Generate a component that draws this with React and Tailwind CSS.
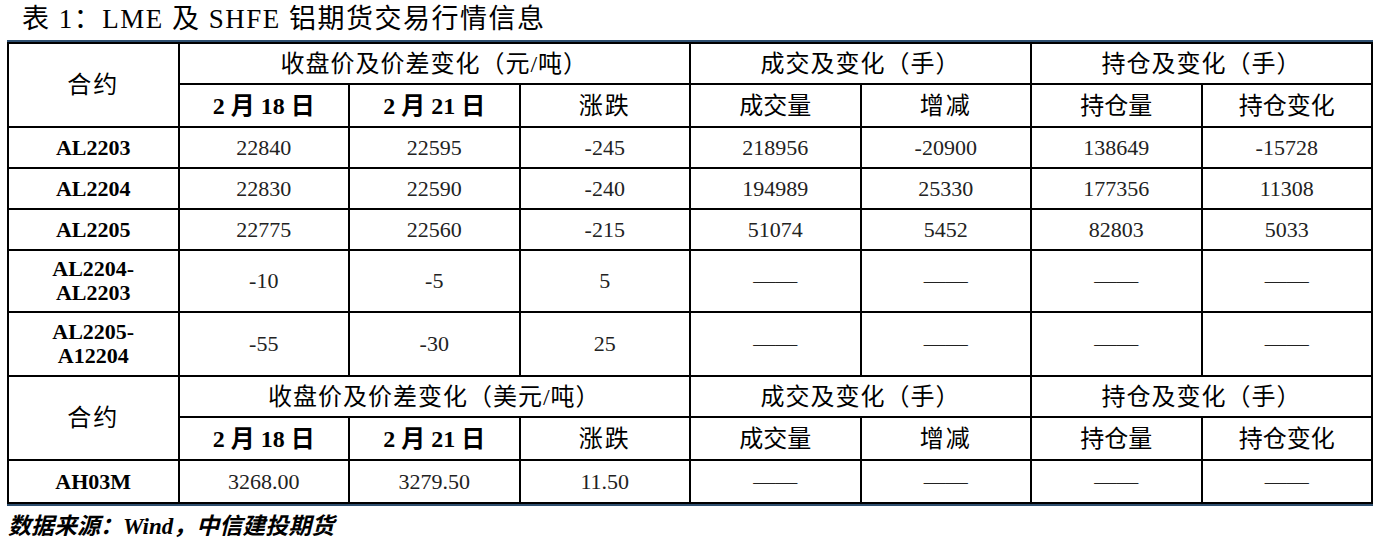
import React from "react";

const serif = { fontFamily: '"Liberation Serif", "Noto Sans CJK SC", serif' };

const cell = "border-2 border-black text-center align-middle p-0";
const hd = "text-[24px] leading-[28px] text-black";
const num = "text-[22px] leading-[24px] text-[#222]";

const dash = "——";

const rows = [
  ["AL2203", "22840", "22595", "-245", "218956", "-20900", "138649", "-15728"],
  ["AL2204", "22830", "22590", "-240", "194989", "25330", "177356", "11308"],
  ["AL2205", "22775", "22560", "-215", "51074", "5452", "82803", "5033"],
];

const spreads = [
  [["AL2204-", "AL2203"], "-10", "-5", "5"],
  [["AL2205-", "A12204"], "-55", "-30", "25"],
];

function HeaderRows({ unit }) {
  return (
    <>
      <tr className="h-[41px]">
        <td rowSpan={2} className={`${cell} ${hd} tracking-[2px]`}>合约</td>
        <td colSpan={3} className={`${cell} ${hd} tracking-[1px]`}>收盘价及价差变化（{unit}）</td>
        <td colSpan={2} className={`${cell} ${hd} tracking-[1px]`}>成交及变化（手）</td>
        <td colSpan={2} className={`${cell} ${hd} tracking-[1px]`}>持仓及变化（手）</td>
      </tr>
      <tr className="h-[43px]">
        <td className={`${cell} ${hd} font-bold`}>2 月 18 日</td>
        <td className={`${cell} ${hd} font-bold`}>2 月 21 日</td>
        <td className={`${cell} ${hd} tracking-[2px]`}>涨跌</td>
        <td className={`${cell} ${hd}`}>成交量</td>
        <td className={`${cell} ${hd} tracking-[2px]`}>增减</td>
        <td className={`${cell} ${hd}`}>持仓量</td>
        <td className={`${cell} ${hd}`}>持仓变化</td>
      </tr>
    </>
  );
}

export default function App() {
  return (
    <div className="w-[1382px] h-[543px] bg-white overflow-hidden" style={serif}>
      <div className="h-[40px] pl-[22px] pt-[2px] text-[27px] leading-[34px] text-black tracking-[1.5px]">
        表 1：LME 及 SHFE 铝期货交易行情信息
      </div>
      <div className="ml-[7px] w-[1366px] border-t-[3px] border-b-[3px] border-[#2e4f70]">
        <table className="w-full table-fixed border-collapse -mt-[1px] -mb-[1px]">
          <colgroup>
            {[0, 1, 2, 3, 4, 5, 6, 7].map((i) => (
              <col key={i} className="w-[12.5%]" />
            ))}
          </colgroup>
          <tbody>
            <HeaderRows unit="元/吨" />
            {rows.map((r) => (
              <tr key={r[0]} className="h-[41px]">
                {r.map((v, i) => (
                  <td key={i} className={`${cell} ${num} ${i === 0 ? "font-bold text-black" : ""}`}>
                    {v}
                  </td>
                ))}
              </tr>
            ))}
            {spreads.map((r, k) => (
              <tr key={k} className={k === 0 ? "h-[62px]" : "h-[64px]"}>
                <td className={`${cell} ${num} font-bold text-black leading-[23px]`}>
                  {r[0][0]}
                  <br />
                  {r[0][1]}
                </td>
                <td className={`${cell} ${num}`}>{r[1]}</td>
                <td className={`${cell} ${num}`}>{r[2]}</td>
                <td className={`${cell} ${num}`}>{r[3]}</td>
                {[0, 1, 2, 3].map((i) => (
                  <td key={i} className={`${cell} ${num}`}>{dash}</td>
                ))}
              </tr>
            ))}
            <HeaderRows unit="美元/吨" />
            <tr className="h-[43px]">
              <td className={`${cell} ${num} font-bold text-black`}>AH03M</td>
              <td className={`${cell} ${num}`}>3268.00</td>
              <td className={`${cell} ${num}`}>3279.50</td>
              <td className={`${cell} ${num}`}>11.50</td>
              {[0, 1, 2, 3].map((i) => (
                <td key={i} className={`${cell} ${num}`}>{dash}</td>
              ))}
            </tr>
          </tbody>
        </table>
      </div>
      <div className="pl-[8px] pt-[7px] text-[23px] leading-[28px] italic font-bold text-black">
        数据来源：Wind，中信建投期货
      </div>
    </div>
  );
}
